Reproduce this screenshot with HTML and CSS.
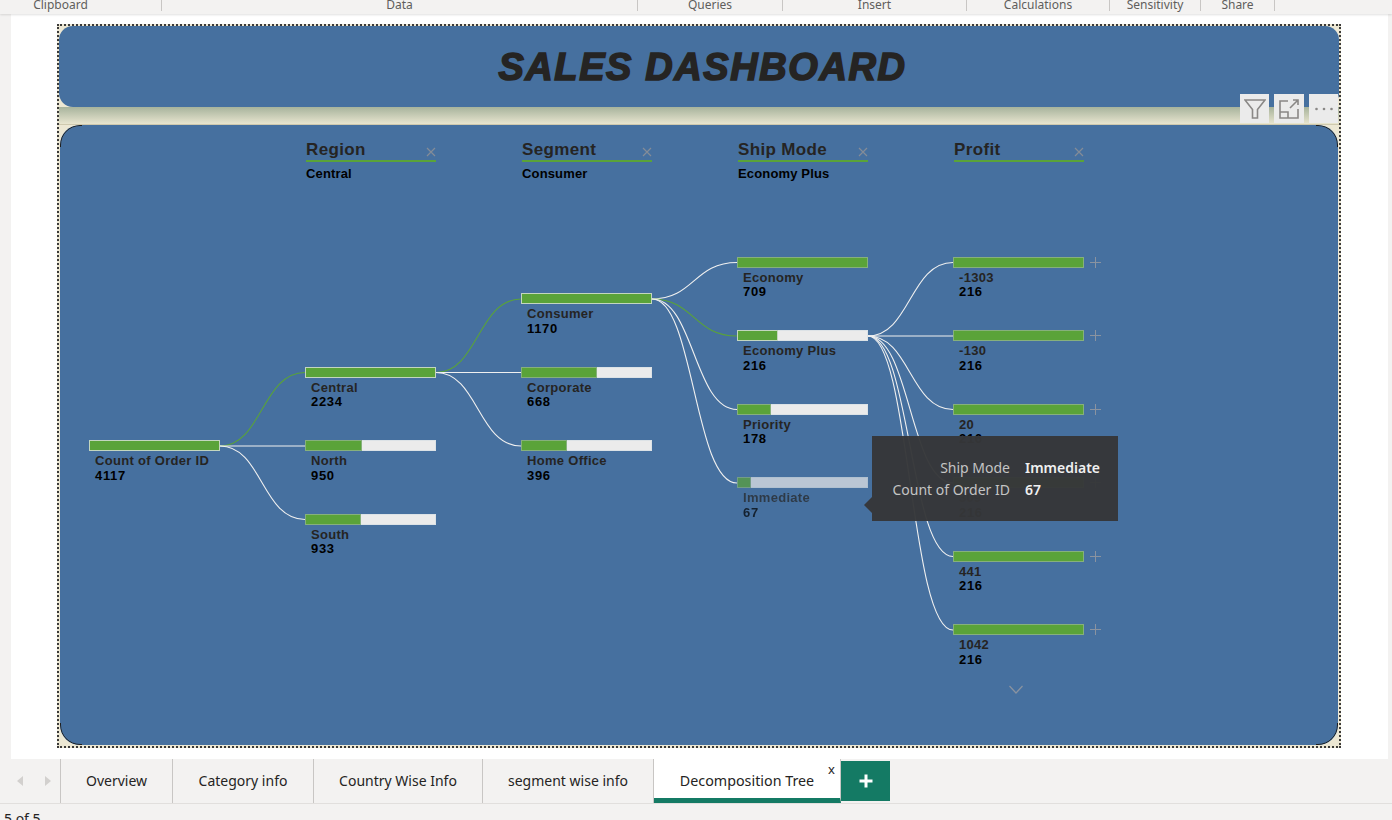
FILE: index.html
```html
<!DOCTYPE html>
<html>
<head>
  <meta charset="UTF-8">
  <title>Sales Dashboard</title>
  <link rel="stylesheet" href="styles.css">
</head>
<body>

  <div class="ribbon">
    <div class="group g-clipboard">Clipboard</div>
    <div class="group g-data">Data</div>
    <div class="group g-queries">Queries</div>
    <div class="group g-insert">Insert</div>
    <div class="group g-calc">Calculations</div>
    <div class="group g-sens">Sensitivity</div>
    <div class="group g-share">Share</div>
  </div>

  <div class="canvas">
    <div class="frame">
      <div class="banner"><h1>SALES DASHBOARD</h1></div>
      <div class="banner-gap"></div>

      <div class="panel">
        <!-- connectors, drawn in page coordinates -->
        <svg class="links" viewBox="60 125 1278 620">
          <path d="M220 446C262 446 262 372.500 305 372.500"/>
          <path d="M220 446H305" class="off"/>
          <path d="M220 446C262 446 262 519.500 305 519.500" class="off"/>
          <path d="M436 372.500C478 372.500 478 299 521 299"/>
          <path d="M436 372.500H521" class="off"/>
          <path d="M436 372.500C478 372.500 478 446 521 446" class="off"/>
          <path d="M652 299C694 299 694 262.500 737 262.500" class="off"/>
          <path d="M652 299C694 299 694 336 737 336"/>
          <path d="M652 299C694 299 694 409.500 737 409.500" class="off"/>
          <path d="M652 299C694 299 694 483 737 483" class="off"/>
          <path d="M868 336C910 336 910 262.500 953 262.500" class="off"/>
          <path d="M868 336H953" class="off"/>
          <path d="M868 336C910 336 910 409.500 953 409.500" class="off"/>
          <path d="M868 336C910 336 910 483 953 483" class="off"/>
          <path d="M868 336C910 336 910 556.500 953 556.500" class="off"/>
          <path d="M868 336C910 336 910 630 953 630" class="off"/>
        </svg>

        <div class="tree">
          <div class="col">
            <div class="col-head"></div>
            <div class="nodes shift-5">
              <div class="node on-path">
                <div class="bar-row"><div class="bar"><div class="fill"></div></div></div>
                <div class="label">Count of Order ID</div>
                <div class="value">4117</div>
              </div>
            </div>
          </div>

          <div class="col">
            <div class="col-head">
              <div class="level"><span>Region</span><svg class="cross" viewBox="0 0 10 10"><path d="M1 1L9 9M9 1L1 9"/></svg></div>
              <div class="picked">Central</div>
            </div>
            <div class="nodes shift-3">
              <div class="node on-path">
                <div class="bar-row"><div class="bar"><div class="fill"></div></div></div>
                <div class="label">Central</div>
                <div class="value">2234</div>
              </div>
              <div class="node">
                <div class="bar-row"><div class="bar"><div class="fill" style="width: 42.5%"></div></div></div>
                <div class="label">North</div>
                <div class="value">950</div>
              </div>
              <div class="node">
                <div class="bar-row"><div class="bar"><div class="fill" style="width: 41.8%"></div></div></div>
                <div class="label">South</div>
                <div class="value">933</div>
              </div>
            </div>
          </div>

          <div class="col">
            <div class="col-head">
              <div class="level"><span>Segment</span><svg class="cross" viewBox="0 0 10 10"><path d="M1 1L9 9M9 1L1 9"/></svg></div>
              <div class="picked">Consumer</div>
            </div>
            <div class="nodes shift-1">
              <div class="node on-path">
                <div class="bar-row"><div class="bar"><div class="fill"></div></div></div>
                <div class="label">Consumer</div>
                <div class="value">1170</div>
              </div>
              <div class="node">
                <div class="bar-row"><div class="bar"><div class="fill" style="width: 57.1%"></div></div></div>
                <div class="label">Corporate</div>
                <div class="value">668</div>
              </div>
              <div class="node">
                <div class="bar-row"><div class="bar"><div class="fill" style="width: 33.8%"></div></div></div>
                <div class="label">Home Office</div>
                <div class="value">396</div>
              </div>
            </div>
          </div>

          <div class="col">
            <div class="col-head">
              <div class="level"><span>Ship Mode</span><svg class="cross" viewBox="0 0 10 10"><path d="M1 1L9 9M9 1L1 9"/></svg></div>
              <div class="picked">Economy Plus</div>
            </div>
            <div class="nodes">
              <div class="node">
                <div class="bar-row"><div class="bar"><div class="fill"></div></div></div>
                <div class="label">Economy</div>
                <div class="value">709</div>
              </div>
              <div class="node on-path">
                <div class="bar-row"><div class="bar"><div class="fill" style="width: 30.5%"></div></div></div>
                <div class="label">Economy Plus</div>
                <div class="value">216</div>
              </div>
              <div class="node">
                <div class="bar-row"><div class="bar"><div class="fill" style="width: 25.1%"></div></div></div>
                <div class="label">Priority</div>
                <div class="value">178</div>
              </div>
              <div class="node dimmed">
                <div class="bar-row"><div class="bar"><div class="fill" style="width: 9.5%"></div></div></div>
                <div class="label">Immediate</div>
                <div class="value">67</div>
              </div>
            </div>
          </div>

          <div class="col">
            <div class="col-head">
              <div class="level"><span>Profit</span><svg class="cross" viewBox="0 0 10 10"><path d="M1 1L9 9M9 1L1 9"/></svg></div>
            </div>
            <div class="nodes">
              <div class="node">
                <div class="bar-row"><div class="bar"><div class="fill"></div></div><svg class="plus" viewBox="0 0 11 11"><path d="M5.5 0V11M0 5.5H11"/></svg></div>
                <div class="label">-1303</div>
                <div class="value">216</div>
              </div>
              <div class="node">
                <div class="bar-row"><div class="bar"><div class="fill"></div></div><svg class="plus" viewBox="0 0 11 11"><path d="M5.5 0V11M0 5.5H11"/></svg></div>
                <div class="label">-130</div>
                <div class="value">216</div>
              </div>
              <div class="node">
                <div class="bar-row"><div class="bar"><div class="fill"></div></div><svg class="plus" viewBox="0 0 11 11"><path d="M5.5 0V11M0 5.5H11"/></svg></div>
                <div class="label">20</div>
                <div class="value">216</div>
              </div>
              <div class="node">
                <div class="bar-row"><div class="bar"><div class="fill"></div></div><svg class="plus" viewBox="0 0 11 11"><path d="M5.5 0V11M0 5.5H11"/></svg></div>
                <div class="label">309</div>
                <div class="value">216</div>
              </div>
              <div class="node">
                <div class="bar-row"><div class="bar"><div class="fill"></div></div><svg class="plus" viewBox="0 0 11 11"><path d="M5.5 0V11M0 5.5H11"/></svg></div>
                <div class="label">441</div>
                <div class="value">216</div>
              </div>
              <div class="node">
                <div class="bar-row"><div class="bar"><div class="fill"></div></div><svg class="plus" viewBox="0 0 11 11"><path d="M5.5 0V11M0 5.5H11"/></svg></div>
                <div class="label">1042</div>
                <div class="value">216</div>
              </div>
              <svg class="more-down" viewBox="0 0 14 9"><path d="M0.5 1L7 8L13.5 1"/></svg>
            </div>
          </div>
        </div>

        <div class="tooltip">
          <div class="tip-key">Ship Mode</div><div class="tip-val">Immediate</div>
          <div class="tip-key">Count of Order ID</div><div class="tip-val">67</div>
        </div>
      </div>

      <div class="visual-actions">
        <div class="action">
          <svg viewBox="0 0 22 22"><path d="M1 2H21L13.500 11.500V20H8.500V11.500Z"/></svg>
        </div>
        <div class="action action-wide">
          <svg viewBox="0 0 22 22"><path d="M10 3H2V20H20V11M2 14H10V20M12 10L20 2M15 2H20V7"/></svg>
        </div>
        <div class="action">
          <svg viewBox="0 0 22 22"><circle cx="3.500" cy="11" r="1.300"/><circle cx="11" cy="11" r="1.300"/><circle cx="18.500" cy="11" r="1.300"/></svg>
        </div>
      </div>
    </div>
  </div>

  <div class="tabbar">
    <div class="tab-nav">
      <span class="arrow arrow-left"></span>
      <span class="arrow arrow-right"></span>
    </div>
    <div class="tab t-overview">Overview</div>
    <div class="tab t-category">Category info</div>
    <div class="tab t-country">Country Wise Info</div>
    <div class="tab t-segment">segment wise info</div>
    <div class="tab active">Decomposition Tree<span class="tab-close">x</span></div>
    <div class="add-tab"><svg viewBox="0 0 14 14"><path d="M7 0.5V13.5M0.5 7H13.5"/></svg></div>
  </div>

  <div class="statusbar">5 of 5</div>

</body>
</html>
```

FILE: styles.css
```css
* {
  box-sizing: border-box;
}

html, body {
  margin: 0;
  height: 820px;
  overflow: hidden;
}

body {
  background-color: #f3f2f1;
  font-family: "Noto Sans", "Open Sans", sans-serif;
  color: #252423;
  display: flex;
  flex-direction: column;
}

/* ribbon, only the group names are in view */
.ribbon {
  height: 14px;
  display: flex;
  flex: none;
  overflow: hidden;
  box-shadow: 0 1px 2px rgba(0, 0, 0, 0.12);
  position: relative;
  z-index: 2;
}

.group {
  height: 11px;
  line-height: 10px;
  font-size: 12px;
  color: #605e5c;
  text-align: center;
  border-right: 1px solid #c8c6c4;
}

.g-clipboard { width: 162px; padding-right: 40px; }
.g-data { width: 476px; }
.g-queries { width: 145px; }
.g-insert { width: 184px; }
.g-calc { width: 143px; }
.g-sens { width: 91px; }
.g-share { width: 74px; }

/* report page */
.canvas {
  height: 745px;
  flex: none;
  margin: 0 4px 0 11px;
  background-color: #fff;
  padding: 10px 47px 0 46px;
}

.frame {
  position: relative;
  height: 724px;
  border: 2px dotted #3b3a39;
  background-color: #ece7d3;
  display: flex;
  flex-direction: column;
}

.banner {
  height: 81px;
  flex: none;
  background-color: #46709f;
  border-radius: 14px;
  display: flex;
  justify-content: center;
  align-items: center;
  padding: 2px 0 0 7px;
}

.banner h1 {
  margin: 0;
  font-family: "Liberation Sans", Arial, sans-serif;
  font-size: 38px;
  font-weight: bold;
  font-style: italic;
  letter-spacing: 1.6px;
  color: #252423;
  -webkit-text-stroke: 1.6px #252423;
}

.banner-gap {
  height: 18px;
  flex: none;
  background: linear-gradient(#a7b39c, #e8e5cf);
  border-bottom: 1px solid #cfc9ae;
}

.panel {
  position: relative;
  height: 620px;
  flex: none;
  margin: 0 1px;
  background-color: #46709f;
  border-radius: 20px;
}

/* the dark edge only shows round the corners */
.panel::before {
  content: "";
  position: absolute;
  inset: 0;
  border: 1px solid #1f1f1f;
  border-radius: 20px;
  mask:
    linear-gradient(#000 0 0) 0 0 / 22px 22px no-repeat,
    linear-gradient(#000 0 0) 100% 0 / 22px 22px no-repeat,
    linear-gradient(#000 0 0) 0 100% / 22px 22px no-repeat,
    linear-gradient(#000 0 0) 100% 100% / 22px 22px no-repeat;
}

.links {
  position: absolute;
  left: 0;
  top: 0;
  width: 1278px;
  height: 620px;
}

.links path {
  fill: none;
  stroke: #5aa339;
  stroke-width: 1.1;
}

.links path.off {
  stroke: #f0f0f0;
}

.tree {
  position: relative;
  display: flex;
  padding: 15px 0 0 29px;
  font-family: "Liberation Sans", Arial, sans-serif;
}

.col {
  width: 216px;
  flex: none;
}

.col-head {
  height: 46px;
}

.level {
  width: 130px;
  height: 22px;
  margin-left: 1px;
  display: flex;
  justify-content: space-between;
  align-items: center;
  border-bottom: 2px solid #5aa339;
  font-size: 17px;
  font-weight: bold;
  letter-spacing: 0.35px;
  color: #252423;
}

.cross {
  width: 10px;
  height: 10px;
  margin-top: 3px;
}

.cross path {
  fill: none;
  stroke: #848c98;
  stroke-width: 1.2;
}

.picked {
  margin: 4px 0 0 1px;
  font-size: 13px;
  line-height: 15px;
  font-weight: bold;
  letter-spacing: 0.15px;
  color: #000;
}

.nodes {
  position: relative;
  padding-top: 70.75px;
}

.shift-1 { padding-top: 107.4px; }
.shift-3 { padding-top: 180.9px; }
.shift-5 { padding-top: 254.4px; }

.node {
  height: 73.5px;
}

.bar-row {
  height: 11px;
  display: flex;
  align-items: center;
  gap: 6px;
}

.bar {
  width: 131px;
  height: 11px;
  flex: none;
  background-color: #ebebeb;
  border: 1px solid #dce2e6;
}

.fill {
  width: 100%;
  height: 100%;
  background-color: #5aa339;
  box-shadow: 0 0 0 1px #86b07c;
}

.on-path .fill {
  box-shadow: 0 0 0 1px #c3d6bf;
}

.plus {
  width: 11px;
  height: 11px;
}

.plus path {
  fill: none;
  stroke: #8a93a0;
  stroke-width: 1;
}

.label, .value {
  margin-left: 6px;
  font-size: 13px;
  line-height: 15px;
  font-weight: bold;
}

.label {
  margin-top: 2px;
  letter-spacing: 0.3px;
  color: #252423;
}

.value {
  margin-top: -0.5px;
  letter-spacing: 0.65px;
  color: #000;
}

.dimmed {
  opacity: 0.7;
}

.more-down {
  position: absolute;
  left: 56px;
  top: 499px;
  width: 14px;
  height: 9px;
}

.more-down path {
  fill: none;
  stroke: #8a93a0;
  stroke-width: 1.2;
}

.tooltip {
  position: absolute;
  left: 812px;
  top: 311px;
  width: 246px;
  height: 85px;
  padding: 21px 19px 0 19px;
  background-color: rgba(54, 55, 57, 0.97);
  display: grid;
  grid-template-columns: 119px auto;
  column-gap: 15px;
  grid-auto-rows: 22px;
  font-size: 14px;
  line-height: 22px;
}

.tooltip::before {
  content: "";
  position: absolute;
  left: -8px;
  top: 61px;
  border: 8px solid transparent;
  border-left-width: 0;
  border-right-color: rgba(54, 55, 57, 0.97);
}

.tip-key {
  text-align: right;
  color: #c4c4c4;
  white-space: nowrap;
}

.tip-val {
  color: #f0f0f0;
  font-weight: 600;
}

.visual-actions {
  position: absolute;
  right: 1px;
  top: 68px;
  display: flex;
  gap: 5px;
}

.action {
  width: 29px;
  height: 29px;
  background-color: #ebebeb;
  display: flex;
  justify-content: center;
  align-items: center;
}

.action-wide {
  width: 30px;
}

.action svg {
  width: 22px;
  height: 22px;
  fill: none;
  stroke: #8a8886;
  stroke-width: 1.6;
}

.action circle {
  fill: #8a8886;
  stroke: none;
}

/* page tabs */
.tabbar {
  height: 45px;
  flex: none;
  display: flex;
  border-bottom: 1px solid #e1dfdd;
}

.tab-nav {
  width: 61px;
  flex: none;
  display: flex;
  align-items: center;
  gap: 22px;
  padding-left: 17px;
  border-right: 1px solid #c8c6c4;
}

.arrow {
  width: 0;
  height: 0;
  border: 5px solid transparent;
}

.arrow-left {
  border-left-width: 0;
  border-right: 6px solid #d2d0ce;
}

.arrow-right {
  border-right-width: 0;
  border-left: 6px solid #d2d0ce;
}

.tab {
  position: relative;
  flex: none;
  height: 44px;
  padding-bottom: 2px;
  display: flex;
  justify-content: center;
  align-items: center;
  font-size: 14px;
  color: #252423;
  border-right: 1px solid #c8c6c4;
}

.t-overview { width: 112px; }
.t-category { width: 141px; }
.t-country { width: 169px; }
.t-segment { width: 171px; }

.tab.active {
  width: 187px;
  padding: 4px 0 0 0;
  font-size: 14.3px;
  background-color: #fff;
  border-bottom: 5px solid #147a64;
}

.tab-close {
  position: absolute;
  right: 5px;
  top: 1px;
  font-size: 13px;
  line-height: 18px;
}

.add-tab {
  width: 49px;
  height: 40px;
  flex: none;
  margin-top: 2px;
  background-color: #147a64;
  display: flex;
  justify-content: center;
  align-items: center;
}

.add-tab svg {
  width: 14px;
  height: 14px;
  fill: none;
  stroke: #fff;
  stroke-width: 3;
}

.statusbar {
  padding: 6px 0 0 4px;
  font-size: 14px;
  line-height: 17px;
  color: #252423;
}
```
